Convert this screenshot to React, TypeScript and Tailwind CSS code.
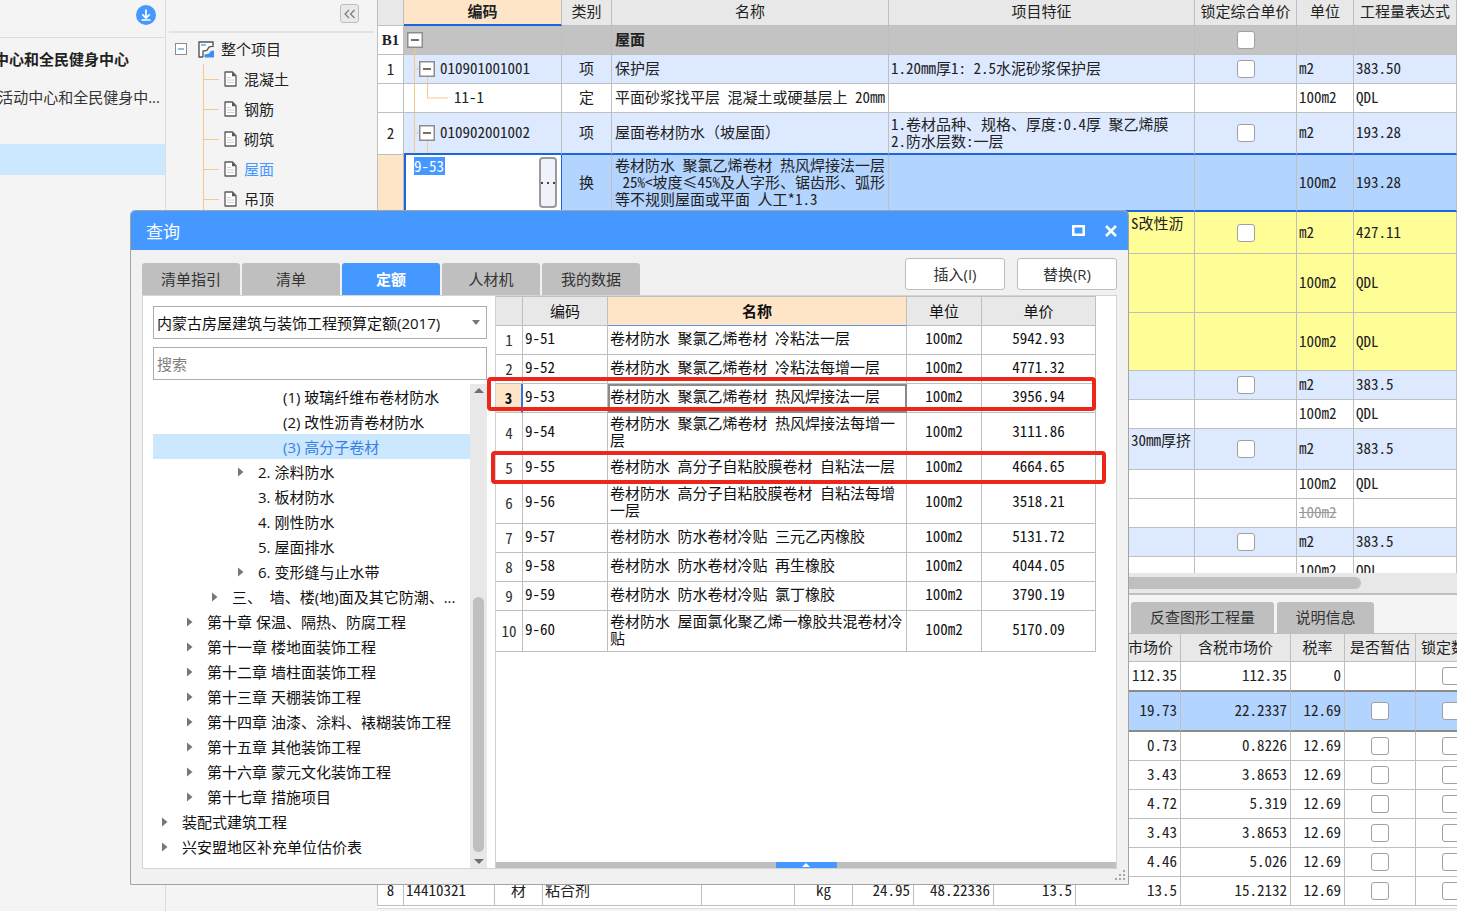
import type { ReactNode } from "react";

const UI = "font-['Open_Sans','Noto_Sans_CJK_SC',sans-serif]";
const MONO = "font-['Noto_Sans_Mono_CJK_SC','Noto_Sans_CJK_SC',monospace]";

function Check({ label }: { label: string }) {
  return (
    <input
      type="checkbox"
      aria-label={label}
      className="block size-[18px] shrink-0 appearance-none rounded-[3px] border border-[#a0a0a0] bg-white"
    />
  );
}

function Minus() {
  return (
    <svg viewBox="0 0 16 16" className="relative block size-4 shrink-0">
      <rect x="0.75" y="0.75" width="14.5" height="14.5" fill="#fff" stroke="#8d8d8d" strokeWidth="1.5" />
      <path d="M4 8h8" stroke="#333" strokeWidth="1.4" />
    </svg>
  );
}

function DocIcon() {
  return (
    <svg viewBox="0 0 13 16" className="h-4 w-[13px] shrink-0">
      <path d="M1 1h7.5L12 4.6V15H1z" fill="#fff" stroke="#595959" strokeWidth="1.3" strokeLinejoin="round" />
      <path d="M8 1v4.2h4z" fill="#595959" />
      <path d="M3 6.5h4M3 9h7M3 11.5h7" stroke="#d0d0d0" strokeWidth="1" />
    </svg>
  );
}

function ProjectIcon() {
  return (
    <svg viewBox="0 0 17 17" className="size-[17px] shrink-0">
      <path d="M1 1h14v4l-3.5 1L9 9.2l-4 .8v6H1z" fill="#fff" />
      <path d="M5 16H1V1h14v3.5" fill="none" stroke="#555" strokeWidth="1.4" />
      <path d="M3 4h5" stroke="#6cb6f5" strokeWidth="1.8" />
      <path d="M16 5.2l-4.8.6L8.8 9.3l-3.8.7V16" fill="none" stroke="#555" strokeWidth="1.3" />
      <path d="M6.5 16.5v-3l4.2-.8 2.4-3H16v6.8z" fill="#3e8ef0" />
    </svg>
  );
}

function Sidebar() {
  return (
    <aside className="w-[166px] shrink-0 overflow-hidden border-r border-[#dcdcdc]">
      <div className="flex h-[38px] items-start justify-end border-b border-[#dcdcdc] pr-[9px] pt-[5px]">
        <button aria-label="下载" className="size-5">
          <svg viewBox="0 0 20 20" className="size-5">
            <circle cx="10" cy="10" r="10" fill="#4598ff" />
            <path d="M10 4.5v8M6.3 9.3L10 13l3.7-3.7M5.5 15h9" fill="none" stroke="#fff" strokeWidth="1.7" />
          </svg>
        </button>
      </div>
      <div className="mt-[7px] flex h-7 w-[129px] items-center justify-end overflow-hidden whitespace-nowrap font-bold">
        <span>中心和全民健身中心</span>
      </div>
      <div className="mt-[10px] flex h-7 w-[160px] items-center justify-end overflow-hidden whitespace-nowrap text-[#333]">
        <span>活动中心和全民健身中...</span>
      </div>
      <div className="mt-[33px] h-[31px] bg-[#cce8ff]" />
    </aside>
  );
}

const parts = ["混凝土", "钢筋", "砌筑", "屋面", "吊顶"];

function ProjectTree() {
  return (
    <nav className="w-[211px] shrink-0 px-[3px]">
      <div className="flex h-[33px] items-start justify-end border-b-2 border-[#e2e2e2] pr-[15px] pt-1">
        <button aria-label="收起" className="flex size-[19px] items-center justify-center rounded-[3px] border border-[#bdbdbd] bg-[#e9e9e9]">
          <svg viewBox="0 0 13 10" className="h-[10px] w-[13px]">
            <path d="M6 1L2 5l4 4M11.5 1l-4 4 4 4" fill="none" stroke="#7a7a7a" strokeWidth="1.2" />
          </svg>
        </button>
      </div>
      <div className="flex h-[31px] items-center pl-[6px] pt-px">
        <svg viewBox="0 0 12 12" className="size-3">
          <rect x="0.5" y="0.5" width="11" height="11" fill="#fff" stroke="#8d8d8d" />
          <path d="M3 6h6" stroke="#3a9ac8" strokeWidth="1.2" />
        </svg>
        <span className="ml-[11px] flex items-center gap-[6px]">
          <ProjectIcon />
          整个项目
        </span>
      </div>
      <ul className="ml-[34px] border-l border-[#f7c98f]">
        {parts.map((p) => (
          <li key={p} className="flex h-[30px] items-center">
            <span className="mr-[5px] h-px w-[15px] bg-[#f7c98f]" />
            <DocIcon />
            <a href="#" className={p === "屋面" ? "ml-[7px] text-[#4598ff]" : "ml-[7px]"}>
              {p}
            </a>
          </li>
        ))}
      </ul>
    </nav>
  );
}

type Row = {
  no?: string;
  h: string;
  bg: string;
  code?: ReactNode;
  kind?: string;
  name?: string;
  feat?: string;
  featRight?: boolean;
  check?: boolean;
  unit?: string;
  qty?: string;
  strike?: boolean;
  bold?: boolean;
  edge?: boolean;
  selected?: boolean;
};

function TreeLines({ d }: { d: ReactNode }) {
  return (
    <svg className="absolute inset-0 h-full w-full" stroke="#f7c98f" strokeWidth="1">
      {d}
    </svg>
  );
}

const childCode = (code: string) => (
  <>
    <TreeLines
      d={
        <>
          <line x1="10.5" y1="0" x2="10.5" y2="100%" />
          <line x1="10" y1="50%" x2="20" y2="50%" />
          <line x1="23.5" y1="50%" x2="23.5" y2="100%" />
        </>
      }
    />
    <span className="flex items-center gap-[5px] pl-[15px]">
      <Minus />
      <span className="pb-[3px]">{code}</span>
    </span>
  </>
);

const rows: Row[] = [
  {
    no: "B1",
    h: "h-[29px]",
    bg: "bg-[#c3c3c3]",
    bold: true,
    name: "屋面",
    check: true,
    code: (
      <>
        <TreeLines d={<line x1="10.5" y1="50%" x2="10.5" y2="100%" />} />
        <span className="block pl-[3px]">
          <Minus />
        </span>
      </>
    ),
  },
  { no: "1", h: "h-[29px]", bg: "bg-[#dce9fe]", code: childCode("010901001001"), kind: "项", name: "保护层", feat: "1.20mm厚1: 2.5水泥砂浆保护层", check: true, unit: "m2", qty: "383.50" },
  {
    h: "h-[29px]",
    bg: "bg-white",
    code: (
      <>
        <TreeLines
          d={
            <>
              <line x1="10.5" y1="0" x2="10.5" y2="100%" />
              <line x1="23.5" y1="0" x2="23.5" y2="50%" />
              <line x1="23" y1="50%" x2="44" y2="50%" />
            </>
          }
        />
        <span className="relative block pb-[3px] pl-[50px]">11-1</span>
      </>
    ),
    kind: "定",
    name: "平面砂浆找平层 混凝土或硬基层上 20mm",
    unit: "100m2",
    qty: "QDL",
  },
  { no: "2", h: "h-[42px]", bg: "bg-[#dce9fe]", code: childCode("010902001002"), kind: "项", name: "屋面卷材防水（坡屋面）", feat: "1.卷材品种、规格、厚度:0.4厚 聚乙烯膜\n2.防水层数:一层", check: true, unit: "m2", qty: "193.28", edge: true },
  {
    h: "h-[57px]",
    bg: "bg-[#b2d4ff]",
    kind: "换",
    name: "卷材防水 聚氯乙烯卷材 热风焊接法一层\n 25%<坡度≤45%及人字形、锯齿形、弧形\n等不规则屋面或平面 人工*1.3",
    unit: "100m2",
    qty: "193.28",
    edge: true,
    selected: true,
  },
  { h: "h-[42px]", bg: "bg-[#fffd96]", feat: "S改性沥\n ", featRight: true, check: true, unit: "m2", qty: "427.11" },
  { h: "h-[59px]", bg: "bg-[#fffd96]", unit: "100m2", qty: "QDL" },
  { h: "h-[58px]", bg: "bg-[#fffd96]", unit: "100m2", qty: "QDL" },
  { h: "h-[29px]", bg: "bg-[#dce9fe]", check: true, unit: "m2", qty: "383.5" },
  { h: "h-[29px]", bg: "bg-white", unit: "100m2", qty: "QDL" },
  { h: "h-[41px]", bg: "bg-[#dce9fe]", feat: "30mm厚挤\n ", featRight: true, check: true, unit: "m2", qty: "383.5" },
  { h: "h-[29px]", bg: "bg-white", unit: "100m2", qty: "QDL" },
  { h: "h-[29px]", bg: "bg-white", unit: "100m2", strike: true },
  { h: "h-[29px]", bg: "bg-[#dce9fe]", check: true, unit: "m2", qty: "383.5" },
  { h: "h-[29px]", bg: "bg-white", unit: "100m2", qty: "QDL" },
];

function BillTable() {
  const th = "border-b border-r border-[#bfbfbf] px-0 pt-0 pb-[5px] font-normal";
  return (
    <table className={`${MONO} w-full table-fixed border-separate border-spacing-0 border-l border-[#bfbfbf] leading-[17px]`}>
      <colgroup>
        <col className="w-[26px]" />
        <col className="w-[158px]" />
        <col className="w-[50px]" />
        <col className="w-[277px]" />
        <col className="w-[306px]" />
        <col className="w-[102px]" />
        <col className="w-[57px]" />
        <col />
      </colgroup>
      <thead>
        <tr className="h-[26px] whitespace-nowrap bg-[#e8e8e8]">
          <th className={th} />
          <th className="border-b-2 border-r border-b-[#1c66dc] border-r-[#bfbfbf] bg-[#ffe5c8] px-0 pb-[4px] pt-0 font-bold">编码</th>
          <th className={th}>类别</th>
          <th className={th}>名称</th>
          <th className={th}>项目特征</th>
          <th className={th}>锁定综合单价</th>
          <th className={th}>单位</th>
          <th className={th}>工程量表达式</th>
        </tr>
      </thead>
      <tbody>
        {rows.map((r, i) => {
          const line = r.edge ? "border-b-2 border-b-[#1c66dc] border-r border-r-[#bfbfbf]" : "border-b border-r border-[#bfbfbf]";
          const base = `${line} ${r.bg} overflow-hidden whitespace-pre pt-0`;
          const td = `${base} pb-[3px]`;
          return (
            <tr key={i} className={r.h}>
              <td
                className={`${r.edge && !r.selected ? "border-b border-r border-[#bfbfbf]" : line} ${r.selected ? "bg-[#ffe5c8]" : "bg-white"} px-0 pt-0 text-center ${r.bold ? "pb-0 font-['Liberation_Serif',serif] font-bold" : "pb-[2px]"}`}
              >
                {r.no}
              </td>
              {r.selected ? (
                <td className="border-b-2 border-l-2 border-r border-[#1c66dc] bg-white p-0">
                  <div className="flex items-stretch justify-between pl-2 pr-1">
                    <input
                      aria-label="编码"
                      defaultValue="9-53"
                      className="h-[18px] w-[31px] bg-[#4598ff] px-0 pb-[2px] pt-0 text-white outline-none"
                    />
                    <button aria-label="选择" className="flex h-[51px] w-[18px] items-center justify-center rounded-[4px] border-2 border-[#9a9a9a] bg-[#eff2fa]">
                      <svg viewBox="0 0 14 2" className="h-[2px] w-[14px]" fill="#444">
                        <rect x="0" width="2" height="2" />
                        <rect x="6" width="2" height="2" />
                        <rect x="12" width="2" height="2" />
                      </svg>
                    </button>
                  </div>
                </td>
              ) : (
                <td className={`${base} relative px-0 pb-0`}>{r.code}</td>
              )}
              <td className={`${td} px-0 text-center`}>{r.kind}</td>
              <td className={`${td} pl-[3px] pr-0 ${r.bold ? "font-bold" : ""}`}>{r.name}</td>
              <td className={`${td} ${r.featRight ? "pl-[242px]" : "pl-[2px]"} pr-0`}>{r.feat}</td>
              <td className={`${base} px-0 pb-0`}>
                {r.check && (
                  <div className="flex justify-center">
                    <Check label="锁定综合单价" />
                  </div>
                )}
              </td>
              <td className={`${td} px-[2px] ${r.strike ? "text-[#9a9a9a] line-through" : ""}`}>{r.unit}</td>
              <td className={`${td} px-[2px]`}>{r.qty}</td>
            </tr>
          );
        })}
      </tbody>
    </table>
  );
}

type Price = { tax: string; net: string; rate: string; check?: boolean; selected?: boolean; rest?: string[] };

const prices: Price[] = [
  { net: "112.35", tax: "112.35", rate: "0" },
  { net: "19.73", tax: "22.2337", rate: "12.69", check: true, selected: true },
  { net: "0.73", tax: "0.8226", rate: "12.69", check: true },
  { net: "3.43", tax: "3.8653", rate: "12.69", check: true },
  { net: "4.72", tax: "5.319", rate: "12.69", check: true },
  { net: "3.43", tax: "3.8653", rate: "12.69", check: true },
  { net: "4.46", tax: "5.026", rate: "12.69", check: true },
  { net: "13.5", tax: "15.2132", rate: "12.69", check: true, rest: ["8", "14410321", "材", "粘合剂", "", "kg", "24.95", "48.22336", "13.5"] },
];

const restAlign = ["px-0 text-center", "px-0 pl-[2px]", "px-0 text-center", "px-0 pl-[2px]", "px-0", "px-0 text-center", "pr-[3px] text-right", "pr-[3px] text-right", "pr-[3px] text-right"];

function PriceTable() {
  return (
    <div className="overflow-hidden border-t border-[#bfbfbf] bg-white">
      <table className={`${MONO} w-[1110px] table-fixed border-separate border-spacing-0 border-l border-[#bfbfbf] leading-[17px]`}>
        <colgroup>
          <col className="w-[26px]" />
          <col className="w-[91px]" />
          <col className="w-[48px]" />
          <col className="w-[159px]" />
          <col className="w-[93px]" />
          <col className="w-[58px]" />
          <col className="w-[61px]" />
          <col className="w-[80px]" />
          <col className="w-[82px]" />
          <col className="w-[105px]" />
          <col className="w-[110px]" />
          <col className="w-[54px]" />
          <col className="w-[71px]" />
          <col />
        </colgroup>
        <thead>
          <tr className="h-[28px] whitespace-nowrap bg-[#e8e8e8]">
            {["", "", "", "", "", "", "", "", "", "不含税市场价", "含税市场价", "税率", "是否暂估", "锁定数量"].map((h, i) => (
              <th key={i} className="border-b border-r border-[#bfbfbf] px-0 pb-[2px] pt-0 font-normal">
                {h}
              </th>
            ))}
          </tr>
        </thead>
        <tbody>
          {prices.map((p, i) => {
            const edge = i === 0 || p.selected;
            const base = `${edge ? "border-b-2 border-b-[#8a8a8a] border-r border-r-[#bfbfbf]" : "border-b border-r border-[#bfbfbf]"} ${p.selected ? "bg-[#b2d4ff]" : "bg-white"} whitespace-nowrap pt-0`;
            const td = `${base} pb-[4px]`;
            return (
              <tr key={i} className={p.selected ? "h-[40px]" : i === 0 ? "h-[30px]" : "h-[29px]"}>
                {restAlign.map((a, k) => (
                  <td key={k} className={`${td} ${a}`}>
                    {p.rest?.[k]}
                  </td>
                ))}
                <td className={`${td} pr-[3px] text-right`}>{p.net}</td>
                <td className={`${td} pr-[3px] text-right`}>{p.tax}</td>
                <td className={`${td} pr-[3px] text-right`}>{p.rate}</td>
                <td className={`${base} pb-0`}>
                  {p.check && (
                    <div className="flex justify-center">
                      <Check label="是否暂估" />
                    </div>
                  )}
                </td>
                <td className={`${base} pb-0`}>
                  <div className="flex justify-center">
                    <Check label="锁定数量" />
                  </div>
                </td>
              </tr>
            );
          })}
        </tbody>
      </table>
      <div className="h-[3px] border-b border-[#dcdcdc]" />
      <div className="h-[2px] bg-[#f4f4f4]" />
    </div>
  );
}

type Node = { t: string; pad: string; arrow?: boolean; on?: boolean };

const nodes: Node[] = [
  { t: "(1) 玻璃纤维布卷材防水", pad: "pl-[108px]" },
  { t: "(2) 改性沥青卷材防水", pad: "pl-[108px]" },
  { t: "(3) 高分子卷材", pad: "pl-[108px]", on: true },
  { t: "2. 涂料防水", pad: "pl-[83px]", arrow: true },
  { t: "3. 板材防水", pad: "pl-[83px]" },
  { t: "4. 刚性防水", pad: "pl-[83px]" },
  { t: "5. 屋面排水", pad: "pl-[83px]" },
  { t: "6. 变形缝与止水带", pad: "pl-[83px]", arrow: true },
  { t: "三、  墙、楼(地)面及其它防潮、...", pad: "pl-[57px]", arrow: true },
  { t: "第十章 保温、隔热、防腐工程", pad: "pl-8", arrow: true },
  { t: "第十一章 楼地面装饰工程", pad: "pl-8", arrow: true },
  { t: "第十二章 墙柱面装饰工程", pad: "pl-8", arrow: true },
  { t: "第十三章 天棚装饰工程", pad: "pl-8", arrow: true },
  { t: "第十四章 油漆、涂料、裱糊装饰工程", pad: "pl-8", arrow: true },
  { t: "第十五章 其他装饰工程", pad: "pl-8", arrow: true },
  { t: "第十六章 蒙元文化装饰工程", pad: "pl-8", arrow: true },
  { t: "第十七章 措施项目", pad: "pl-8", arrow: true },
  { t: "装配式建筑工程", pad: "pl-[7px]", arrow: true },
  { t: "兴安盟地区补充单位估价表", pad: "pl-[7px]", arrow: true },
];

function Catalog() {
  return (
    <div className="flex w-[353px] shrink-0 flex-col border-r border-[#d0d0d0] pl-[10px] pr-[8px] pt-[10px]">
      <div className="relative">
        <select
          aria-label="定额库"
          className="block h-[33px] w-full appearance-none border border-[#adadad] bg-white pl-[3px] pr-6 text-[#111] outline-none"
        >
          <option>内蒙古房屋建筑与装饰工程预算定额(2017)</option>
        </select>
        <svg viewBox="0 0 8 5" className="pointer-events-none absolute right-[7px] top-[14px] h-[5px] w-2">
          <path d="M0 0h8L4 5z" fill="#777" />
        </svg>
      </div>
      <input
        aria-label="搜索"
        placeholder="搜索"
        className="mt-2 block h-[33px] w-full border border-[#adadad] bg-white px-[3px] outline-none placeholder:text-[#808080]"
      />
      <div className="mt-1 flex min-h-0 flex-1">
        <ul className="min-w-0 flex-1 overflow-hidden">
          {nodes.map((n) => (
            <li key={n.t} className={`flex h-[25px] items-center ${n.pad} ${n.on ? "bg-[#cce8ff] text-[#3a80de]" : "text-[#111]"}`}>
              <span className="flex w-[22px] shrink-0">
                {n.arrow && (
                  <svg viewBox="0 0 6 10" className="ml-[2px] h-[10px] w-[6px]">
                    <path d="M0 0.5L5.5 5 0 9.5z" fill="#777" />
                  </svg>
                )}
              </span>
              <span className="whitespace-pre">{n.t}</span>
            </li>
          ))}
        </ul>
        <div className="flex w-[17px] shrink-0 flex-col items-center justify-between bg-[#e8e8e8] py-1">
          <svg viewBox="0 0 10 5" className="h-[5px] w-[10px]">
            <path d="M0 5h10L5 0z" fill="#707070" />
          </svg>
          <div className="flex w-full flex-1 flex-col justify-end px-[3px] pb-[7px] pt-[204px]">
            <div className="flex-1 rounded-full bg-[#bfbfbf]" />
          </div>
          <svg viewBox="0 0 10 5" className="h-[5px] w-[10px]">
            <path d="M0 0h10L5 5z" fill="#707070" />
          </svg>
        </div>
      </div>
    </div>
  );
}

const quotas: [string, string, string][] = [
  ["9-51", "卷材防水 聚氯乙烯卷材 冷粘法一层", "5942.93"],
  ["9-52", "卷材防水 聚氯乙烯卷材 冷粘法每增一层", "4771.32"],
  ["9-53", "卷材防水 聚氯乙烯卷材 热风焊接法一层", "3956.94"],
  ["9-54", "卷材防水 聚氯乙烯卷材 热风焊接法每增一\n层", "3111.86"],
  ["9-55", "卷材防水 高分子自粘胶膜卷材 自粘法一层", "4664.65"],
  ["9-56", "卷材防水 高分子自粘胶膜卷材 自粘法每增\n一层", "3518.21"],
  ["9-57", "卷材防水 防水卷材冷贴 三元乙丙橡胶", "5131.72"],
  ["9-58", "卷材防水 防水卷材冷贴 再生橡胶", "4044.05"],
  ["9-59", "卷材防水 防水卷材冷贴 氯丁橡胶", "3790.19"],
  ["9-60", "卷材防水 屋面氯化聚乙烯一橡胶共混卷材冷\n贴", "5170.09"],
];

function QuotaTable() {
  const line = "border-b border-r border-[#bfbfbf]";
  const cell = `${line} pt-0 pb-[5px]`;
  return (
    <table className={`${MONO} w-full table-fixed border-separate border-spacing-0 border-t border-[#bfbfbf] leading-[17px] text-[#111]`}>
      <colgroup>
        <col className="w-[27px]" />
        <col className="w-[85px]" />
        <col />
        <col className="w-[75px]" />
        <col className="w-[114px]" />
      </colgroup>
      <thead>
        <tr className="h-[29px] bg-[#e8e8e8]">
          <th className={line} />
          <th className={`${line} px-0 pb-[2px] pt-0 font-normal`}>编码</th>
          <th className="border-b border-r border-b-[#5b92e0] border-r-[#bfbfbf] bg-[#ffe5c8] px-0 pb-[2px] pt-0 font-bold">名称</th>
          <th className={`${line} px-0 pb-[2px] pt-0 font-normal`}>单位</th>
          <th className={`${line} px-0 pb-[2px] pt-0 font-normal`}>单价</th>
        </tr>
      </thead>
      <tbody>
        {quotas.map(([code, name, price], i) => {
          const on = i === 2;
          return (
            <tr key={code} className={name.includes("\n") ? "h-[41px]" : "h-[29px]"}>
              <td
                className={
                  on
                    ? "border-b border-r-2 border-b-[#bfbfbf] border-r-[#2f74e0] bg-[#ffe5c8] px-0 pb-[2px] pt-0 text-center font-bold"
                    : `${line} px-0 pb-[2px] pt-0 text-center text-[#333]`
                }
              >
                {i + 1}
              </td>
              <td className={`${cell} px-[2px]`}>{code}</td>
              <td className={`${cell} whitespace-pre px-[2px] ${on ? "outline-2 -outline-offset-2 outline-[#8a8a8a]" : ""}`}>{name}</td>
              <td className={`${cell} px-0 text-center`}>100m2</td>
              <td className={`${cell} px-0 text-center`}>{price}</td>
            </tr>
          );
        })}
      </tbody>
    </table>
  );
}

const tabs = ["清单指引", "清单", "定额", "人材机", "我的数据"];

function QueryDialog() {
  return (
    <section
      role="dialog"
      aria-label="查询"
      className="absolute bottom-[26px] left-[130px] right-[328px] top-[210px] flex flex-col rounded-t-[5px] border border-[#a3a3a3] bg-[#f1f1f1]"
    >
      <header className="flex h-[39px] shrink-0 items-center justify-between rounded-t-[4px] bg-[#4598ff] pl-[15px] pr-[11px] text-[17px] text-white">
        <h2 className="pt-[2px]">查询</h2>
        <div className="flex items-center gap-5">
          <button aria-label="最大化">
            <svg viewBox="0 0 13 11" className="h-[11px] w-[13px]">
              <rect x="1.25" y="1.25" width="10.5" height="8.5" fill="none" stroke="#fff" strokeWidth="2.5" />
            </svg>
          </button>
          <button aria-label="关闭">
            <svg viewBox="0 0 12 12" className="size-3">
              <path d="M1 1l10 10M11 1L1 11" stroke="#fff" strokeWidth="2.5" />
            </svg>
          </button>
        </div>
      </header>
      <div className="flex shrink-0 items-end justify-between px-[11px] pt-2">
        <div role="tablist" className="flex gap-[2px]">
          {tabs.map((t) => (
            <button
              key={t}
              role="tab"
              aria-selected={t === "定额"}
              className={`h-8 w-[98px] rounded-t-[3px] pb-px ${t === "定额" ? "bg-[#4598ff] font-bold text-white" : "bg-[#bfbfbf] text-[#333]"}`}
            >
              {t}
            </button>
          ))}
        </div>
        <div className="mb-[5px] flex gap-3">
          <button className="h-8 w-[100px] rounded-[3px] border border-[#bdbdbd] bg-white pb-px text-[#333]">插入(I)</button>
          <button className="h-8 w-[100px] rounded-[3px] border border-[#bdbdbd] bg-white pb-px text-[#333]">替换(R)</button>
        </div>
      </div>
      <div className="mx-[11px] mb-[15px] flex min-h-0 flex-1 border border-[#d4d4d4] bg-white">
        <Catalog />
        <div className="flex min-w-0 flex-1 flex-col">
          <div className="min-h-0 flex-1 pr-5">
            <QuotaTable />
          </div>
          <button aria-label="展开" className="flex h-[6px] justify-center bg-[#bfbfbf]">
            <span className="flex h-[6px] w-[61px] items-center justify-center bg-[#4598ff]">
              <svg viewBox="0 0 8 4" className="h-1 w-2">
                <path d="M0 4h8L4 0z" fill="#fff" />
              </svg>
            </span>
          </button>
        </div>
      </div>
      <svg viewBox="0 0 10 10" className="absolute bottom-1 right-[3px] size-[10px]" fill="#a8a8a8">
        <rect x="8" y="0" width="2" height="2" />
        <rect x="4" y="4" width="2" height="2" />
        <rect x="8" y="4" width="2" height="2" />
        <rect x="0" y="8" width="2" height="2" />
        <rect x="4" y="8" width="2" height="2" />
        <rect x="8" y="8" width="2" height="2" />
      </svg>
      <div className="pointer-events-none absolute left-[356px] right-[32px] top-[166px] h-[34px] rounded-[4px] border-4 border-[#ec2618]" />
      <div className="pointer-events-none absolute left-[360px] right-[22px] top-[240px] h-[33px] rounded-[4px] border-4 border-[#ec2618]" />
    </section>
  );
}

export default function App() {
  return (
    <div className={`${UI} relative flex h-screen overflow-hidden bg-[#f4f4f4] text-[15px] leading-5 text-[#222]`}>
      <Sidebar />
      <ProjectTree />
      <main className="flex min-w-0 flex-1 flex-col">
        <div className="min-h-0 flex-1 overflow-hidden bg-white">
          <BillTable />
        </div>
        <div className="h-[20px] shrink-0 bg-[#e8e8e8] pr-[96px] pt-1">
          <div className="h-3 rounded-r-full bg-[#bfbfbf]" />
        </div>
        <div className="shrink-0 border-t-2 border-[#bfbfbf]">
          <div className="flex gap-[3px] pl-[754px] pt-[7px]">
            <button className="h-[31px] w-[143px] rounded-t-[3px] bg-[#bfbfbf] pb-[2px] text-[#333]">反查图形工程量</button>
            <button className="h-[31px] w-[97px] rounded-t-[3px] bg-[#bfbfbf] pb-[2px] text-[#333]">说明信息</button>
          </div>
          <PriceTable />
        </div>
      </main>
      <QueryDialog />
    </div>
  );
}
